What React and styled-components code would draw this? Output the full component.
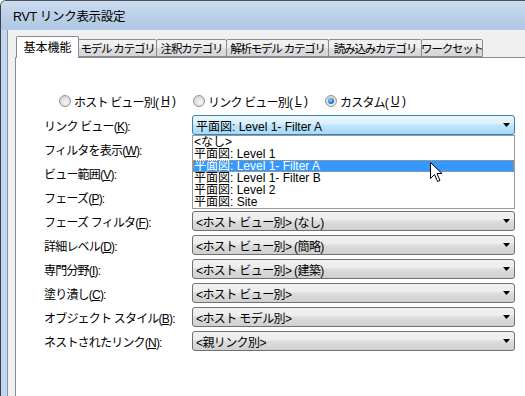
import React from "react";
import styled, { createGlobalStyle } from "styled-components";

const GlobalStyle = createGlobalStyle`
  html, body {
    margin: 0;
    padding: 0;
    background: #ffffff;
  }
  body {
    font-family: "Liberation Sans", "Noto Sans CJK JP", sans-serif;
    font-size: 12px;
    color: #000;
  }
`;

const Window = styled.div`
  width: 525px;
  height: 396px;
  box-sizing: border-box;
  overflow: hidden;
  display: flex;
  flex-direction: column;
  border-top: 1px solid #4a4f57;
  border-left: 1px solid #3b3f45;
  border-top-left-radius: 6px;
`;

const TitleBar = styled.div`
  flex: none;
  height: 29px;
  display: flex;
  align-items: center;
  padding-left: 12px;
  background: linear-gradient(#cadcef, #b9cfe7 60%, #aec7e3);
  font-size: 12.5px;
  letter-spacing: -0.3px;
`;

const Frame = styled.div`
  flex: 1;
  min-height: 0;
  display: flex;
  padding-left: 6px;
  background: #c1d7ee;
`;

const Client = styled.div`
  flex: 1;
  display: flex;
  flex-direction: column;
  border-left: 1px solid #8a97a8;
  background: #f0f0f0;
  padding: 6px 0 0 7px;
`;

const TabRow = styled.div`
  display: flex;
  align-items: flex-end;
  height: 21px;
  padding-left: 1px;
  position: relative;
  z-index: 1;
`;

const Tab = styled.div`
  box-sizing: border-box;
  width: ${(p) => p.$w}px;
  height: ${(p) => (p.$active ? 22 : 18)}px;
  margin-left: ${(p) => (p.$first ? 0 : -1)}px;
  margin-bottom: ${(p) => (p.$active ? -1 : 0)}px;
  border: 1px solid #898c95;
  border-bottom: ${(p) => (p.$active ? "none" : "1px solid #898c95")};
  border-radius: 2px 2px 0 0;
  background: ${(p) =>
    p.$active ? "#ffffff" : "linear-gradient(#f3f3f3, #ebebeb 50%, #dddddd 51%, #d6d6d6)"};
  display: flex;
  align-items: ${(p) => (p.$active ? "flex-start" : "center")};
  padding-top: ${(p) => (p.$active ? 1 : 0)}px;
  justify-content: center;
  white-space: nowrap;
  overflow: hidden;
  position: relative;
  z-index: ${(p) => (p.$active ? 2 : 1)};
  font-size: ${(p) => (p.$active ? 12 : 11.5)}px;
  letter-spacing: ${(p) => (p.$active ? 0 : -1.2)}px;
`;

const Panel = styled.div`
  flex: 1;
  background: #ffffff;
  border-top: 1px solid #898c95;
  border-left: 1px solid #898c95;
  padding: 31px 0 0 28px;
`;

const RadioRow = styled.div`
  display: grid;
  grid-template-columns: 134px 132px auto;
  height: 24px;
  align-items: center;
  padding-left: 15px;
`;

const RadioOption = styled.label`
  display: flex;
  align-items: center;
  gap: 3px;
  white-space: nowrap;
  letter-spacing: -0.8px;
`;

const RadioDot = styled.span`
  box-sizing: border-box;
  width: 12px;
  height: 12px;
  border-radius: 50%;
  border: 1px solid #8f9396;
  background: radial-gradient(circle at 60% 65%, #f7f7f7, #d3d3d3 80%);
  display: flex;
  align-items: center;
  justify-content: center;
  &::after {
    content: "";
    display: ${(p) => (p.$checked ? "block" : "none")};
    width: 6px;
    height: 6px;
    border-radius: 50%;
    background: radial-gradient(circle at 40% 35%, #9fdcff, #1c7ed6 55%, #0a4f9a);
  }
`;

const FieldRow = styled.div`
  display: grid;
  grid-template-columns: 148px 323px;
  height: 24px;
  align-items: center;
  position: relative;
  z-index: ${(p) => (p.$open ? 3 : 0)};
`;

const Label = styled.span`
  white-space: nowrap;
  letter-spacing: -0.8px;
`;

const Combo = styled.div`
  box-sizing: border-box;
  height: 20px;
  border: 1px solid ${(p) => (p.$focus ? "#3c7fb1" : "#707070")};
  border-radius: 3px;
  background: ${(p) =>
    p.$focus
      ? "linear-gradient(#eaf6fd, #d9f0fc 45%, #bee6fd 50%, #a7d9f5)"
      : "linear-gradient(#f2f2f2, #ebebeb 45%, #dddddd 50%, #cfcfcf)"};
  display: flex;
  align-items: center;
  justify-content: space-between;
  padding: 0 4px 0 3px;
  white-space: nowrap;
  letter-spacing: ${(p) => (p.$focus ? 0 : -0.6)}px;
`;

const DropList = styled.div`
  position: absolute;
  top: 22px;
  left: 148px;
  width: 323px;
  box-sizing: border-box;
  border: 1px solid #9a9a9a;
  background: #ffffff;
`;

const ListItem = styled.div`
  box-sizing: border-box;
  height: 12px;
  line-height: 12px;
  padding-left: 1px;
  white-space: nowrap;
  overflow: hidden;
  background: ${(p) => (p.$sel ? "#3399ff" : "transparent")};
  color: ${(p) => (p.$sel ? "#ffffff" : "#000000")};
  outline: ${(p) => (p.$sel ? "1px dotted #e8913a" : "none")};
  outline-offset: -1px;
`;

const Cursor = styled.svg`
  position: absolute;
  left: 237px;
  top: 26px;
`;

const Arrow = () => (
  <svg width="7" height="4" viewBox="0 0 7 4">
    <polygon points="0,0 7,0 3.5,4" fill="#000" />
  </svg>
);

const tabs = [
  { t: "基本機能", w: 63, active: true },
  { t: "モデル カテゴリ", w: 79 },
  { t: "注釈カテゴリ", w: 71 },
  { t: "解析モデル カテゴリ", w: 103 },
  { t: "読み込みカテゴリ", w: 94 },
  { t: "ワークセット", w: 62 },
];

const listItems = [
  "<なし>",
  "平面図: Level 1",
  "平面図: Level 1- Filter A",
  "平面図: Level 1- Filter B",
  "平面図: Level 2",
  "平面図: Site",
];

const fields = [
  { l: "フィルタを表示", k: "W", v: "" },
  { l: "ビュー範囲", k: "V", v: "" },
  { l: "フェーズ", k: "P", v: "" },
  { l: "フェーズ フィルタ", k: "F", v: "<ホスト ビュー別> (なし)" },
  { l: "詳細レベル", k: "D", v: "<ホスト ビュー別> (簡略)" },
  { l: "専門分野", k: "I", v: "<ホスト ビュー別> (建築)" },
  { l: "塗り潰し", k: "C", v: "<ホスト ビュー別>" },
  { l: "オブジェクト スタイル", k: "B", v: "<ホスト モデル別>" },
  { l: "ネストされたリンク", k: "N", v: "<親リンク別>" },
];

export default function App() {
  return (
    <>
      <GlobalStyle />
      <Window>
        <TitleBar>RVT リンク表示設定</TitleBar>
        <Frame>
          <Client>
            <TabRow>
              {tabs.map((tab, i) => (
                <Tab key={tab.t} $w={tab.w} $active={tab.active} $first={i === 0}>
                  {tab.t}
                </Tab>
              ))}
            </TabRow>
            <Panel>
              <RadioRow>
                <RadioOption>
                  <RadioDot />
                  ホスト ビュー別(<u>H</u>)
                </RadioOption>
                <RadioOption>
                  <RadioDot />
                  リンク ビュー別(<u>L</u>)
                </RadioOption>
                <RadioOption>
                  <RadioDot $checked />
                  カスタム(<u>U</u>)
                </RadioOption>
              </RadioRow>

              <FieldRow $open>
                <Label>
                  リンク ビュー(<u>K</u>):
                </Label>
                <Combo $focus>
                  <span>平面図: Level 1- Filter A</span>
                  <Arrow />
                </Combo>
                <DropList>
                  {listItems.map((item, i) => (
                    <ListItem key={item} $sel={i === 2}>
                      {item}
                    </ListItem>
                  ))}
                  <Cursor width="13" height="21" viewBox="0 0 13 21">
                    <path
                      d="M0.5 0.5 L0.5 16.5 L4.5 12.5 L7.5 19.5 L10 18.5 L7 11.5 L12 11.5 Z"
                      fill="#fff"
                      stroke="#000"
                      strokeWidth="1"
                    />
                  </Cursor>
                </DropList>
              </FieldRow>

              {fields.map((f) => (
                <FieldRow key={f.k}>
                  <Label>
                    {f.l}(<u>{f.k}</u>):
                  </Label>
                  <Combo>
                    <span>{f.v}</span>
                    <Arrow />
                  </Combo>
                </FieldRow>
              ))}
            </Panel>
          </Client>
        </Frame>
      </Window>
    </>
  );
}
